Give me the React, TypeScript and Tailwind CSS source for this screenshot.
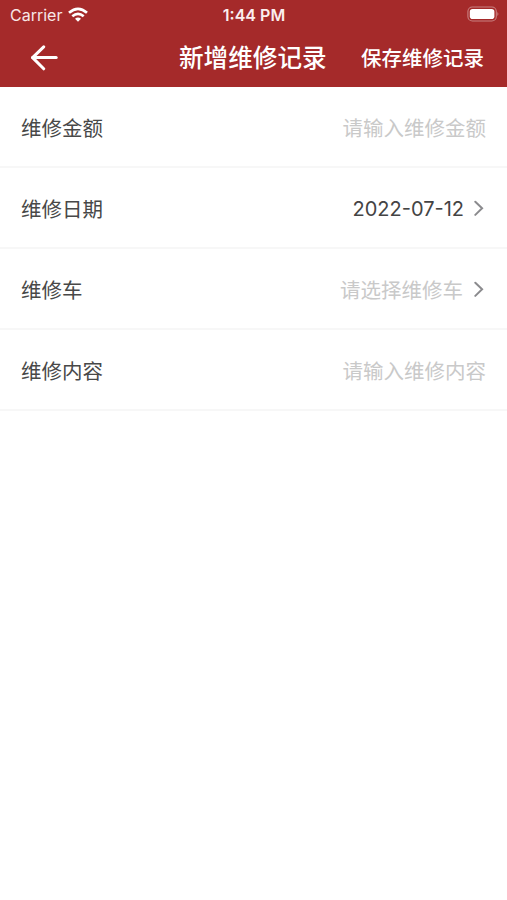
import React from "react";

function Chevron() {
  return (
    <svg className="mr-[1px] h-4 w-[11px]" viewBox="0 0 11 16" fill="none" stroke="#8b8b8e" strokeWidth="2" strokeLinecap="round">
      <path d="M1.3 1.7L8.1 8.3L1.3 14.9" />
    </svg>
  );
}

type RowProps = { label: string; value: string; muted?: boolean; arrow?: boolean };

function Row({ label, value, muted, arrow }: RowProps) {
  return (
    <div className="flex h-[81px] items-center justify-between border-b-2 border-[#f7f7f7] px-[21px]">
      <span className="pt-[5px] text-[20.5px] text-[#484848]">{label}</span>
      <div className={arrow && muted ? "flex items-center gap-[11px]" : "flex items-center gap-[10px]"}>
        {muted ? (
          <span className="pt-[5px] text-[20.5px] text-[#c9c9c9]">{value}</span>
        ) : (
          <span className="pt-[2px] text-[20px] text-[#444444]">{value}</span>
        )}
        {arrow && <Chevron />}
      </div>
    </div>
  );
}

export default function App() {
  return (
    <div className="h-[900px] w-[507px] overflow-hidden bg-white font-['Inter','Noto_Sans_CJK_SC',sans-serif]">
      <header className="h-[87px] bg-[#a52a2a] text-white">
        <div className="grid h-[29px] grid-cols-3 items-center pl-[10px] pr-[8px] text-[16px]">
          <div className="flex items-center gap-[6px]">
            <span className="text-[#f8e6e6]">Carrier</span>
            <svg className="h-[15px] w-[20px]" viewBox="0 0 20 15" fill="none" stroke="white" strokeWidth="2.7">
              <path d="M1 5.8Q10 -2 19 5.8M4.3 9.3Q10 4.5 15.7 9.3" />
              <path d="M7 11.8Q10 9.2 13 11.8L10 14.7Z" fill="white" stroke="none" />
            </svg>
          </div>
          <span className="-ml-[1px] text-center font-semibold text-[#fbeeee]">1:44 PM</span>
          <svg className="mb-[1px] h-[16px] w-[32px] justify-self-end" viewBox="0 0 32 16">
            <rect x="0.9" y="1" width="28.4" height="14" rx="4.5" fill="none" stroke="#c98080" strokeWidth="1.1" />
            <rect x="2.8" y="3" width="24.6" height="10" rx="2.8" fill="white" />
            <path d="M30.4 6Q32.4 8 30.4 10Z" fill="#c98080" />
          </svg>
        </div>
        <div className="flex h-[58px] items-center pl-[30px] pr-[23px]">
          <svg className="h-[26px] w-[28px]" viewBox="0 0 28 26" fill="none" stroke="white" strokeWidth="3" strokeLinecap="round" strokeLinejoin="round">
            <path d="M13.7 1.8L2.6 12.6L13.7 23.8" />
            <path d="M2.6 12.6H26.2" />
          </svg>
          <h1 className="ml-[121px] text-[24.6px] font-medium">新增维修记录</h1>
          <button className="ml-auto pt-[2px] text-[20.5px] font-medium">保存维修记录</button>
        </div>
      </header>
      <main>
        <Row label="维修金额" value="请输入维修金额" muted />
        <Row label="维修日期" value="2022-07-12" arrow />
        <Row label="维修车" value="请选择维修车" muted arrow />
        <Row label="维修内容" value="请输入维修内容" muted />
      </main>
    </div>
  );
}
